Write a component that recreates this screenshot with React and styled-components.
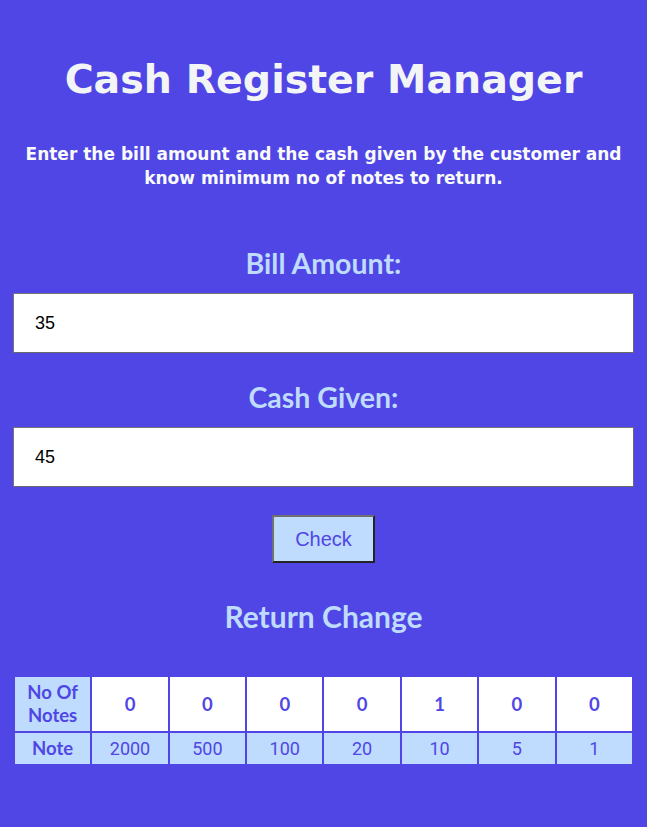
import React from "react";
import styled, { createGlobalStyle } from "styled-components";

const Global = createGlobalStyle`
  html, body { margin: 0; padding: 0; background: #4f46e5; }
  body { font-family: "Lato", "Noto Sans", sans-serif; }
  * { box-sizing: border-box; }
`;

const Page = styled.main`
  display: flex;
  flex-direction: column;
  align-items: center;
  min-height: 827px;
  padding-top: 54px;
  padding-bottom: 40px;
`;

const Title = styled.h1`
  margin: 0;
  font-family: "DejaVu Sans", "Lato", sans-serif;
  font-size: 39.5px;
  line-height: 50px;
  font-weight: 700;
  color: #f3f4f6;
  text-align: center;
`;

const Subtitle = styled.p`
  margin: 38px 0 0;
  width: 612px;
  font-family: "DejaVu Sans", "Lato", sans-serif;
  font-size: 17px;
  line-height: 24px;
  font-weight: 700;
  color: #f9fafb;
  text-align: center;
`;

const Label = styled.label`
  display: block;
  margin: ${(p) => p.$top}px 0 0;
  font-size: ${(p) => p.$size || 28.5}px;
  line-height: ${(p) => (p.$size ? p.$size + 6 : 34)}px;
  font-weight: 700;
  color: #bfdbfe;
  text-align: center;
`;

const Input = styled.input`
  display: block;
  width: 96%;
  height: 60px;
  margin-top: ${(p) => p.$top}px;
  padding: 0 0 0 21px;
  border: 1px solid #767676;
  border-right-color: #6a6a6a;
  border-bottom-color: #6a6a6a;
  background: #ffffff;
  font-family: "Liberation Sans", Arial, sans-serif;
  font-size: 18px;
  color: #000;
  outline: none;
`;

const Button = styled.button`
  margin-top: 28px;
  padding: 10px 21px;
  line-height: 24px;
  font-family: "Liberation Sans", Arial, sans-serif;
  font-size: 20px;
  color: #4f46e5;
  background: #bfdbfe;
  border: 2px solid;
  border-color: #6f6f6f #242424 #242424 #6f6f6f;
  cursor: pointer;
`;

const Table = styled.table`
  margin-top: 41px;
  width: 96%;
  table-layout: fixed;
  border-collapse: separate;
  border-spacing: 2px;
`;

const HeadCell = styled.th`
  padding: 4px 2px;
  background: #bfdbfe;
  color: #4f46e5;
  font-size: 18.5px;
  line-height: 23px;
  font-weight: 700;
  text-align: center;
  vertical-align: middle;
`;

const CountCell = styled.td`
  padding: 4px 2px;
  background: #ffffff;
  color: #4f46e5;
  font-size: 18.5px;
  line-height: 23px;
  font-weight: 700;
  text-align: center;
  vertical-align: middle;
`;

const NoteCell = styled.td`
  padding: 4px 2px;
  background: #bfdbfe;
  color: #4f46e5;
  font-family: "Roboto", sans-serif;
  font-size: 18px;
  line-height: 23px;
  font-weight: 400;
  text-align: center;
  vertical-align: middle;
`;

const notes = [2000, 500, 100, 20, 10, 5, 1];
const counts = [0, 0, 0, 0, 1, 0, 0];

export default function App() {
  return (
    <>
      <Global />
      <Page>
        <Title>Cash Register Manager</Title>
        <Subtitle>
          Enter the bill amount and the cash given by the customer and know minimum no of notes to return.
        </Subtitle>
        <Label $top={56} htmlFor="bill">Bill Amount:</Label>
        <Input $top={13} id="bill" type="number" defaultValue="35" />
        <Label $top={27} htmlFor="cash">Cash Given:</Label>
        <Input $top={13} id="cash" type="number" defaultValue="45" />
        <Button type="button">Check</Button>
        <Label as="h2" $top={35} $size={30}>Return Change</Label>
        <Table>
          <tbody>
            <tr>
              <HeadCell>No Of Notes</HeadCell>
              {counts.map((c, i) => (
                <CountCell key={i}>{c}</CountCell>
              ))}
            </tr>
            <tr>
              <HeadCell>Note</HeadCell>
              {notes.map((n) => (
                <NoteCell key={n}>{n}</NoteCell>
              ))}
            </tr>
          </tbody>
        </Table>
      </Page>
    </>
  );
}
